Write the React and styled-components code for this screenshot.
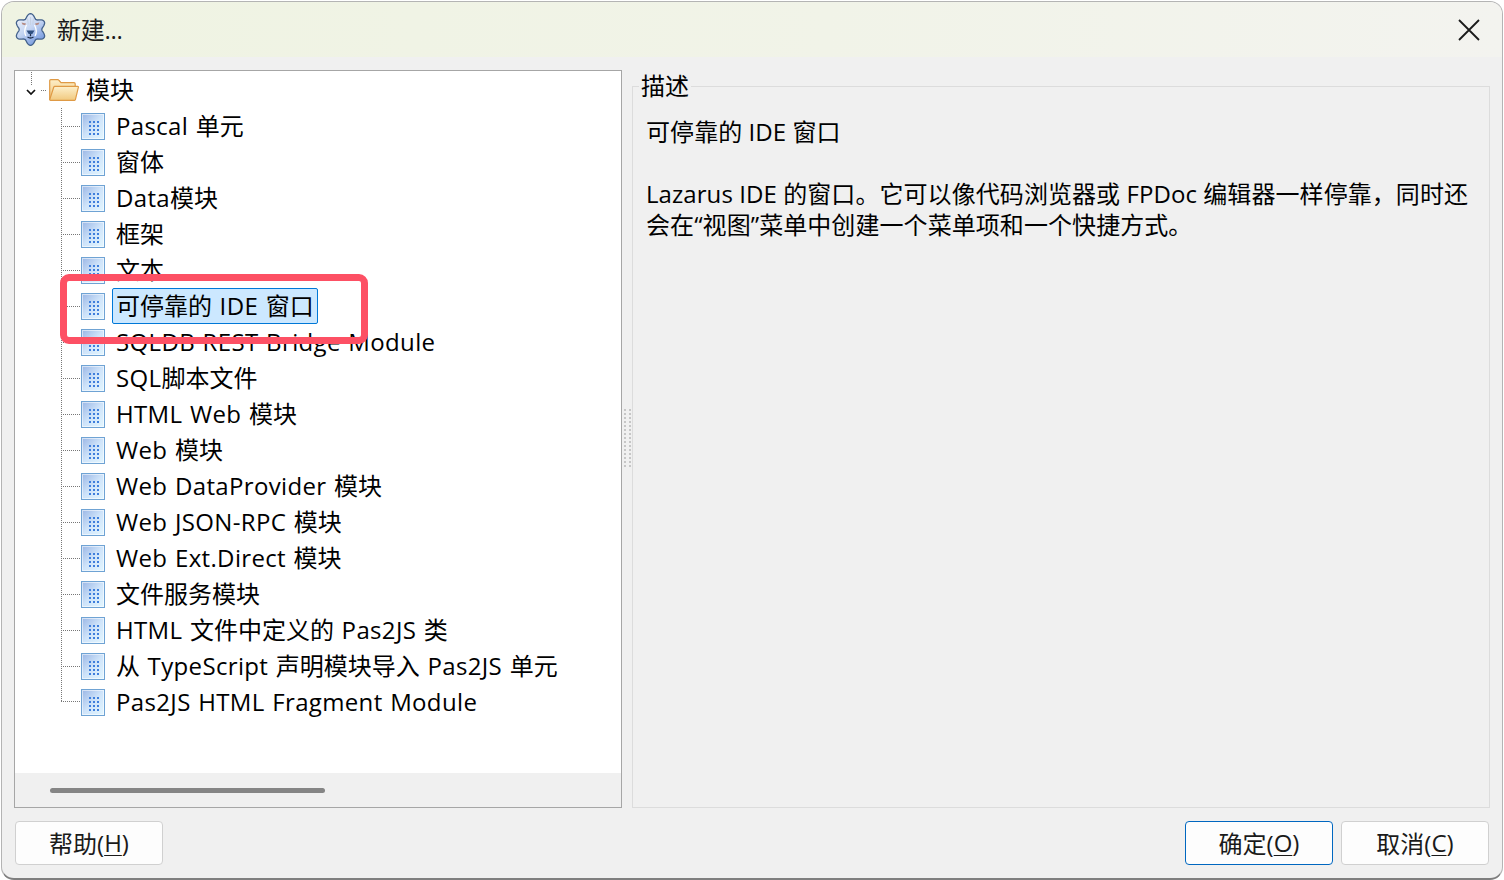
import React from 'react';
import styled, { createGlobalStyle } from 'styled-components';

const items = [
    'Pascal 单元',
    '窗体',
    'Data模块',
    '框架',
    '文本',
    '可停靠的 IDE 窗口',
    'SQLDB REST Bridge Module',
    'SQL脚本文件',
    'HTML Web 模块',
    'Web 模块',
    'Web DataProvider 模块',
    'Web JSON-RPC 模块',
    'Web Ext.Direct 模块',
    '文件服务模块',
    'HTML 文件中定义的 Pas2JS 类',
    '从 TypeScript 声明模块导入 Pas2JS 单元',
    'Pas2JS HTML Fragment Module',
];

// the latin runs are a bit wider in the screenshot than in Open Sans
function spaced(text) {
    return text.split(/([\x20-\x7e]+)/).map((part, i) => (i % 2 === 1 ? <Latin key={i}>{part}</Latin> : part));
}

// six lobes, drawn from a polar curve
function gearPath() {
    const points = [];
    for (let i = 0; i < 96; i++) {
        const a = (i / 96) * Math.PI * 2;
        const r = 13.6 + 2.3 * Math.cos(6 * a);
        points.push((15.5 + r * Math.sin(a)).toFixed(2) + ' ' + (16.5 - r * Math.cos(a)).toFixed(2));
    }
    return 'M' + points.join('L') + 'Z';
}

function LionIcon() {
    return (
        <svg width="31" height="33" viewBox="0 0 31 33">
            <defs>
                <linearGradient id="lion" x1="0.15" y1="0" x2="0.75" y2="1">
                    <stop offset="0" stopColor="#f1f4fa" />
                    <stop offset="0.5" stopColor="#c3d4f2" />
                    <stop offset="1" stopColor="#6d93dc" />
                </linearGradient>
            </defs>
            <path d={gearPath()} fill="url(#lion)" stroke="#44628c" strokeWidth="1.3" />
            <path d="M15.5 4v8M12.5 5.5l.8 6M18.5 5.5l-.8 6" stroke="#c6d2e4" strokeWidth="1" fill="none" />
            <path d="M6.5 9.5l4.5 1-.8 1.8-2.7-.8zM24.5 9.5l-4.5 1 .8 1.8 2.7-.8z" fill="#b58a82" />
            <path d="M11.5 12c-2 4-2.5 8-.5 11M19.5 12c2 4 2.5 8 .5 11" stroke="#ffffff" strokeWidth="1.3" fill="none" />
            <path d="M11.5 17.5h8l-2.2 3.5h-3.6z" fill="#2f4f80" />
            <path d="M15.5 21v2.2M12.5 24c1.8 1.2 4.2 1.2 6 0" stroke="#1f2f4d" strokeWidth="1.3" fill="none" />
        </svg>
    );
}

function FolderIcon() {
    return (
        <svg width="30" height="22" viewBox="0 0 30 22">
            <defs>
                <linearGradient id="folderBack" x1="0" y1="0" x2="0" y2="1">
                    <stop offset="0" stopColor="#fdeec6" />
                    <stop offset="1" stopColor="#efc67c" />
                </linearGradient>
                <linearGradient id="folderFront" x1="0" y1="0" x2="0" y2="1">
                    <stop offset="0" stopColor="#fdf0cb" />
                    <stop offset="1" stopColor="#f1c97f" />
                </linearGradient>
            </defs>
            <path
                d="M.7 20.5V1.7c0-.6.4-1 1-1h7c.6 0 1 .3 1.4.8L12 3.7h13c.7 0 1.2.5 1.2 1.2V8H6.5L2.5 20.5Z"
                fill="url(#folderBack)"
                stroke="#df9a45"
                strokeWidth="1.2"
            />
            <path
                d="M5.7 7.3h23c.5 0 .8.4.7.9l-3 12.4c-.1.4-.4.7-.8.7H1.5c-.5 0-.8-.4-.7-.9L4.8 8c.1-.4.5-.7.9-.7Z"
                fill="url(#folderFront)"
                stroke="#df9a45"
                strokeWidth="1.2"
            />
        </svg>
    );
}

function DocIcon() {
    const dots = [];
    for (let r = 0; r < 4; r++) {
        for (let c = 0; c < 3; c++) {
            dots.push(<rect key={r + '-' + c} x={8 + c * 4} y={8 + r * 4} width="2" height="2" fill="#3f7fdc" />);
        }
    }
    return (
        <svg width="24" height="27" viewBox="0 0 24 27">
            <defs>
                <linearGradient id="doc" x1="0" y1="0" x2="1" y2="1">
                    <stop offset="0" stopColor="#98b4e4" />
                    <stop offset="0.5" stopColor="#cfe4fa" />
                    <stop offset="1" stopColor="#e4f7ff" />
                </linearGradient>
            </defs>
            <rect x="0.5" y="0.5" width="23" height="26" fill="url(#doc)" stroke="#6fa3d4" />
            <rect x="1.5" y="1.5" width="21" height="24" fill="none" stroke="#ffffff" strokeOpacity="0.55" />
            {dots}
        </svg>
    );
}

export default function App() {
    return (
        <>
            <GlobalStyle />
            <Window>
                <TitleBar>
                    <LionIcon />
                    <TitleText>新建...</TitleText>
                    <CloseButton>
                        <svg width="22" height="22" viewBox="0 0 22 22">
                            <path d="M1 1l20 20M21 1L1 21" stroke="#1a1a1a" strokeWidth="1.8" fill="none" />
                        </svg>
                    </CloseButton>
                </TitleBar>
                <Content>
                    <TreePanel>
                        <TreeArea>
                            <RootRow>
                                <Expander>
                                    <ExpanderStem />
                                    <svg width="12" height="8" viewBox="0 0 12 8">
                                        <path d="M2 2l4 4 4-4" stroke="#111" strokeWidth="1.7" fill="none" />
                                    </svg>
                                </Expander>
                                <RootDash />
                                <FolderIcon />
                                <RootLabel>模块</RootLabel>
                            </RootRow>
                            {items.map((name, i) => (
                                <Row key={name}>
                                    <Connector $last={i === items.length - 1} />
                                    <DocIcon />
                                    <Label $selected={i === 5}>{spaced(name)}</Label>
                                </Row>
                            ))}
                        </TreeArea>
                        <ScrollTrack>
                            <ScrollThumb />
                        </ScrollTrack>
                    </TreePanel>
                    <Splitter>
                        <Grip />
                    </Splitter>
                    <Group>
                        <GroupTitle>描述</GroupTitle>
                        <Description>
                            可停靠的 IDE 窗口
                            <br />
                            <br />
                            Lazarus IDE 的窗口。它可以像代码浏览器或 FPDoc 编辑器一样停靠，同时还
                            <br />
                            会在“视图”菜单中创建一个菜单项和一个快捷方式。
                        </Description>
                    </Group>
                </Content>
                <Footer>
                    <Button>
                        帮助(<u>H</u>)
                    </Button>
                    <FooterRight>
                        <Button $primary>
                            确定(<u>O</u>)
                        </Button>
                        <Button>
                            取消(<u>C</u>)
                        </Button>
                    </FooterRight>
                </Footer>
                <Highlight />
            </Window>
        </>
    );
}

const GlobalStyle = createGlobalStyle`
    html, body {
        margin: 0;
        padding: 0;
        background: #ffffff;
    }

    body {
        font-family: "Open Sans", "Noto Sans CJK SC", sans-serif;
        font-size: 24px;
        color: #000;
    }

    #root {
        width: 1504px;
        height: 880px;
        padding: 1px 1px 0 1px;
        box-sizing: border-box;
        overflow: hidden;
    }
`;

const Window = styled.div`
    position: relative;
    width: 1502px;
    height: 879px;
    box-sizing: border-box;
    display: flex;
    flex-direction: column;
    background-color: #f0f0f0;
    border: 1px solid #b4b4b4;
    border-bottom: 2px solid #7f7f7f;
    border-radius: 13px;
    overflow: hidden;
`;

const TitleBar = styled.div`
    height: 55px;
    flex-shrink: 0;
    display: flex;
    align-items: center;
    padding: 0 20px 0 13px;
    background: linear-gradient(90deg, #eff3e2 0%, #f1f3e8 55%, #f3f3ef 100%);

    svg {
        flex-shrink: 0;
    }
`;

const TitleText = styled.span`
    margin-left: 11px;
    color: #1a1a1a;
    line-height: 32px;
    letter-spacing: -0.3px;
`;

const CloseButton = styled.div`
    margin-left: auto;
    margin-right: 2px;
    width: 22px;
    height: 22px;
    display: flex;
`;

const Content = styled.div`
    flex: 1;
    min-height: 0;
    display: flex;
    padding: 13px 12px 0 12px;
`;

const TreePanel = styled.div`
    width: 608px;
    flex-shrink: 0;
    box-sizing: border-box;
    display: flex;
    flex-direction: column;
    background-color: #ffffff;
    border: 1px solid #a6a6a6;
`;

const TreeArea = styled.div`
    flex: 1;
    min-height: 0;
    padding-top: 1px;
`;

const RootRow = styled.div`
    height: 36px;
    display: flex;
    align-items: center;
    padding-left: 10px;

    svg {
        flex-shrink: 0;
    }
`;

const Expander = styled.div`
    width: 12px;
    height: 36px;
    display: flex;
    flex-direction: column;
    align-items: center;
`;

const ExpanderStem = styled.div`
    width: 1px;
    height: 14px;
    margin-bottom: 2px;
    background-image: linear-gradient(#777 50%, transparent 50%);
    background-size: 1px 2px;
`;

const RootDash = styled.div`
    width: 5px;
    height: 1px;
    margin: 0 3px 0 4px;
    background-image: linear-gradient(90deg, #777 50%, transparent 50%);
    background-size: 2px 1px;
`;

const RootLabel = styled.span`
    margin-left: 7px;
    line-height: 32px;
`;

const Row = styled.div`
    height: 36px;
    display: flex;
    align-items: center;
    padding-left: 46px;

    svg {
        flex-shrink: 0;
    }
`;

const Connector = styled.div`
    width: 20px;
    height: ${(props) => (props.$last ? '18px' : '36px')};
    align-self: flex-start;
    flex-shrink: 0;
    background-image: linear-gradient(#777 50%, transparent 50%), linear-gradient(90deg, #777 50%, transparent 50%);
    background-size: 1px 2px, 2px 1px;
    background-repeat: repeat-y, repeat-x;
    background-position: 0 0, 0 ${(props) => (props.$last ? '17px' : '18px')};
`;

const Label = styled.span`
    margin-left: 7px;
    padding: 0 3px;
    height: 34px;
    line-height: 34px;
    white-space: nowrap;
    border: 1px solid ${(props) => (props.$selected ? '#0078d7' : 'transparent')};
    border-radius: 2px;
    background-color: ${(props) => (props.$selected ? '#cce8ff' : 'transparent')};
`;

const Latin = styled.span`
    letter-spacing: 0.35px;
    word-spacing: 1px;
`;

const ScrollTrack = styled.div`
    height: 34px;
    flex-shrink: 0;
    display: flex;
    align-items: center;
    padding: 0 0 2px 35px;
    box-sizing: border-box;
    background-color: #f0f0f0;
`;

const ScrollThumb = styled.div`
    width: 275px;
    height: 5px;
    margin-top: 3px;
    border-radius: 3px;
    background-color: #858585;
`;

const Splitter = styled.div`
    width: 10px;
    flex-shrink: 0;
    display: flex;
    align-items: center;
    justify-content: center;
`;

const Grip = styled.div`
    width: 7px;
    height: 58px;
    margin-bottom: 2px;
    background-image: conic-gradient(transparent 75%, #c6c6c6 75%);
    background-size: 5px 4px;
`;

const Group = styled.fieldset`
    flex: 1;
    min-width: 0;
    margin: 0;
    padding: 14px 0 0 13px;
    border: 1px solid #dcdcdc;
`;

const GroupTitle = styled.legend`
    margin-left: -7px;
    padding: 0 2px;
    line-height: 32px;
    color: #000;
`;

const Description = styled.div`
    line-height: 31px;
    white-space: nowrap;
    letter-spacing: 0.07px;
    color: #000;
`;

const Footer = styled.div`
    flex-shrink: 0;
    display: flex;
    justify-content: space-between;
    padding: 13px 13px 13px 13px;
`;

const FooterRight = styled.div`
    display: flex;
    gap: 8px;
`;

const Button = styled.div`
    width: 148px;
    height: 44px;
    box-sizing: border-box;
    padding-bottom: 2px;
    display: flex;
    align-items: center;
    justify-content: center;
    color: #1a1a1a;
    background-color: #fdfdfd;
    border: 1px solid ${(props) => (props.$primary ? '#0067c0' : '#d0d0d0')};
    border-radius: 4px;

    u {
        text-underline-offset: 3px;
        text-decoration-thickness: 1px;
    }
`;

const Highlight = styled.div`
    position: absolute;
    left: 58px;
    top: 272px;
    width: 308px;
    height: 70px;
    box-sizing: border-box;
    border: 7px solid #fd5064;
    border-radius: 9px;
`;
